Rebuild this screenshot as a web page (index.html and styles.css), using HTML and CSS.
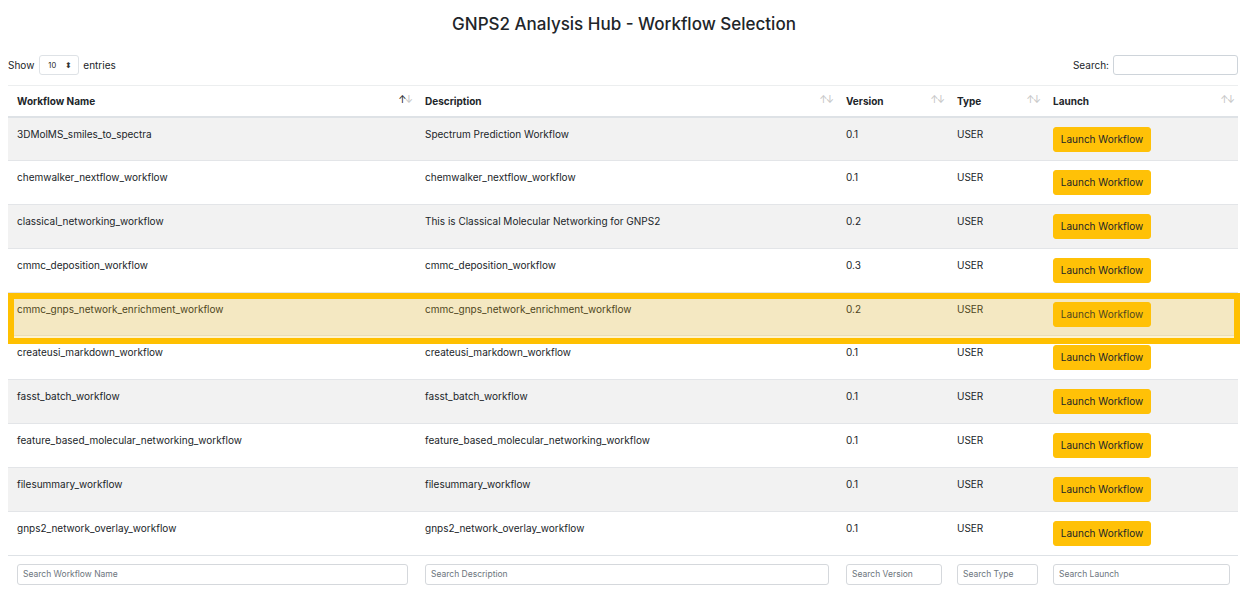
FILE: index.html
```html
<!DOCTYPE html>
<html lang="en">
<head>
<meta charset="utf-8">
<title>GNPS2 Analysis Hub - Workflow Selection</title>
<link rel="stylesheet" href="styles.css">
</head>
<body>
<h1 class="title">GNPS2 Analysis Hub - Workflow Selection</h1>
<div class="controls">
  <label class="length">Show
    <span class="select">10<span class="updown">&#x2B0D;</span></span>
    entries</label>
  <label class="filter">Search: <span class="search-box"></span></label>
</div>
<div class="table-wrap">
<table class="wf">
  <colgroup>
    <col class="c1"><col class="c2"><col class="c3"><col class="c4"><col class="c5">
  </colgroup>
  <thead>
    <tr>
      <th><span>Workflow Name</span><span class="sort"><b class="on">↑</b><b>↓</b></span></th>
      <th><span>Description</span><span class="sort"><b>↑</b><b>↓</b></span></th>
      <th><span>Version</span><span class="sort"><b>↑</b><b>↓</b></span></th>
      <th><span>Type</span><span class="sort"><b>↑</b><b>↓</b></span></th>
      <th><span>Launch</span><span class="sort"><b>↑</b><b>↓</b></span></th>
    </tr>
  </thead>
  <tbody>
    <tr><td>3DMolMS_smiles_to_spectra</td><td>Spectrum Prediction Workflow</td><td>0.1</td><td>USER</td><td><button class="btn">Launch Workflow</button></td></tr>
    <tr><td>chemwalker_nextflow_workflow</td><td>chemwalker_nextflow_workflow</td><td>0.1</td><td>USER</td><td><button class="btn">Launch Workflow</button></td></tr>
    <tr><td>classical_networking_workflow</td><td>This is Classical Molecular Networking for GNPS2</td><td>0.2</td><td>USER</td><td><button class="btn">Launch Workflow</button></td></tr>
    <tr><td>cmmc_deposition_workflow</td><td>cmmc_deposition_workflow</td><td>0.3</td><td>USER</td><td><button class="btn">Launch Workflow</button></td></tr>
    <tr><td>cmmc_gnps_network_enrichment_workflow</td><td>cmmc_gnps_network_enrichment_workflow</td><td>0.2</td><td>USER</td><td><button class="btn">Launch Workflow</button></td></tr>
    <tr><td>createusi_markdown_workflow</td><td>createusi_markdown_workflow</td><td>0.1</td><td>USER</td><td><button class="btn">Launch Workflow</button></td></tr>
    <tr><td>fasst_batch_workflow</td><td>fasst_batch_workflow</td><td>0.1</td><td>USER</td><td><button class="btn">Launch Workflow</button></td></tr>
    <tr><td>feature_based_molecular_networking_workflow</td><td>feature_based_molecular_networking_workflow</td><td>0.1</td><td>USER</td><td><button class="btn">Launch Workflow</button></td></tr>
    <tr><td>filesummary_workflow</td><td>filesummary_workflow</td><td>0.1</td><td>USER</td><td><button class="btn">Launch Workflow</button></td></tr>
    <tr><td>gnps2_network_overlay_workflow</td><td>gnps2_network_overlay_workflow</td><td>0.1</td><td>USER</td><td><button class="btn">Launch Workflow</button></td></tr>
  </tbody>
  <tfoot>
    <tr>
      <td><input class="col-search" placeholder="Search Workflow Name"></td>
      <td><input class="col-search" placeholder="Search Description"></td>
      <td><input class="col-search" placeholder="Search Version"></td>
      <td><input class="col-search" placeholder="Search Type"></td>
      <td><input class="col-search" placeholder="Search Launch"></td>
    </tr>
  </tfoot>
</table>
<div class="highlight"></div>
</div>
</body>
</html>
```
FILE: styles.css
```css
* { box-sizing: border-box; }
html, body { margin: 0; padding: 0; background: #fff; }
body {
  font-family: Inter, "Liberation Sans", Arial, sans-serif;
  color: #212529;
  font-size: 10px;
  padding: 0 8px;
  width: 1248px;
}
.title {
  margin: 0;
  padding-top: 12px;
  height: 50px;
  font-size: 17px;
  font-weight: 500;
  text-align: center;
  line-height: 24px;
}
.controls {
  display: flex;
  justify-content: space-between;
  align-items: center;
  height: 30px;
}
.length { display: flex; align-items: center; gap: 3px; font-size: 10px; }
.select {
  display: inline-flex;
  align-items: center;
  justify-content: space-between;
  width: 40px;
  height: 20px;
  border: 1px solid #dee2e6;
  border-radius: 3px;
  padding: 0 6px 0 8px;
  font-size: 7.5px;
  margin-left: 2px;
  margin-right: 1px;
}
.updown { font-size: 8px; color: #333; }
.filter { display: flex; align-items: center; gap: 4px; font-size: 10px; margin-right: 2px; }
.search-box {
  display: inline-block;
  width: 125px;
  height: 20px;
  border: 1px solid #ced4da;
  border-radius: 3px;
}
.table-wrap { position: relative; margin-top: 5px; width: 1230px; }
.wf {
  width: 1230px;
  border-collapse: collapse;
  table-layout: fixed;
}
.c1 { width: 408px; }
.c2 { width: 421px; }
.c3 { width: 111px; }
.c4 { width: 96px; }
.c5 { width: 194px; }
.wf thead th {
  position: relative;
  border-top: 1px solid #eceeef;
  border-bottom: 2px solid #dee2e6;
  height: 31px;
  padding: 0 7px 0 9px;
  text-align: left;
  font-weight: 700;
  font-size: 10px;
  vertical-align: middle;
}
.sort {
  position: absolute;
  right: 5px;
  top: 7px;
  font-size: 10px;
  letter-spacing: -2px;
  color: #c4c4c4;
}
.sort b { font-weight: 400; }
.sort .on { color: #222; }
.wf tbody td {
  padding: 9px 9px 0 9px;
  height: 43.9px;
  vertical-align: top;
  border-top: 1px solid #e3e5e8;
  line-height: 15px;
  font-size: 10px;
  white-space: nowrap;
  overflow: hidden;
}
.wf tbody tr:first-child td { border-top: none; }
.wf tbody tr:nth-child(odd) td { background: #f2f2f2; }
.btn {
  display: block;
  font-family: inherit;
  font-size: 10px;
  color: #212529;
  background: #ffc107;
  border: 1px solid #ffc107;
  border-radius: 3px;
  height: 25px;
  width: 98px;
  padding: 0;
  margin: 0;
  line-height: 23px;
}
.wf tfoot td {
  border-top: 1px solid #dee2e6;
  padding: 8px 8px 0 9px;
  height: 36px;
  vertical-align: top;
}
.wf tfoot td:nth-child(3), .wf tfoot td:nth-child(4) { padding-right: 6px; }
.col-search {
  display: block;
  width: 100%;
  height: 21px;
  border: 1px solid #d5d8dc;
  border-radius: 3px;
  padding: 0 5px;
  font-family: inherit;
  font-size: 8.5px;
  color: #495057;
}
.col-search::placeholder { color: #6c757d; }
.highlight {
  position: absolute;
  left: 0;
  top: 208px;
  width: 1232px;
  height: 51px;
  border: 6px solid #ffc000;
  background: rgba(255, 193, 7, 0.2);
  pointer-events: none;
}
```
